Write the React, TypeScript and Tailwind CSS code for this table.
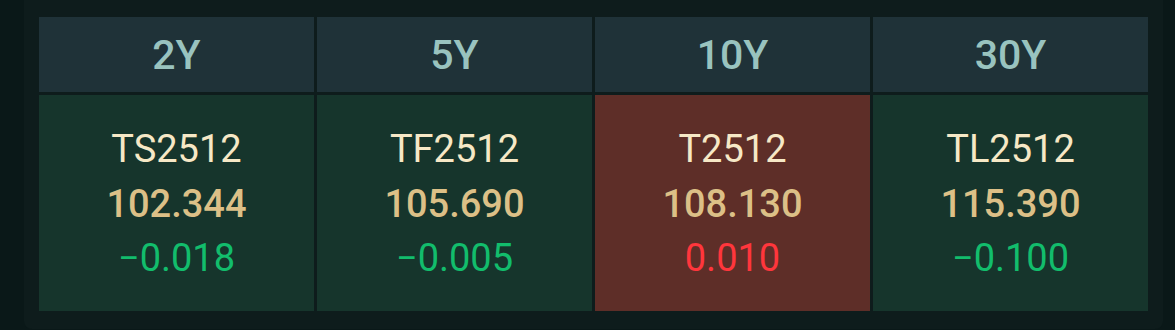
const contracts = [
  { tenor: '2Y', code: 'TS2512', price: '102.344', change: '−0.018', up: false },
  { tenor: '5Y', code: 'TF2512', price: '105.690', change: '−0.005', up: false },
  { tenor: '10Y', code: 'T2512', price: '108.130', change: '0.010', up: true },
  { tenor: '30Y', code: 'TL2512', price: '115.390', change: '−0.100', up: false },
];

export default function App() {
  return (
    <div className="h-[330px] w-[1175px] bg-[#0a1818] pl-[24px] pr-[12px] pb-[1px] font-['Roboto',sans-serif]">
      <div className="h-full rounded-b-lg bg-[#0e1c1c] px-[15px] pt-[17px] pb-[18px]">
        <div className="grid h-full grid-cols-4 grid-rows-[75px_1fr] gap-[3px]">
          {contracts.map((c) => (
            <div
              key={c.tenor}
              className="flex items-center justify-center bg-[#1f3238] pt-[2px] text-[41px] font-medium text-[#99c3bf]"
            >
              {c.tenor}
            </div>
          ))}
          {contracts.map((c) => (
            <div
              key={c.code}
              className={`flex flex-col items-center justify-center pt-[2px] text-[38px] leading-[54.5px] ${
                c.up ? 'bg-[#5e2e28]' : 'bg-[#16352c]'
              }`}
            >
              <span className="text-[#f6e8c6]">{c.code}</span>
              <span className="font-medium text-[#dcc087]">{c.price}</span>
              <span className={c.up ? 'text-[#ff363c]' : 'text-[#12bd6c]'}>
                {c.change}
              </span>
            </div>
          ))}
        </div>
      </div>
    </div>
  );
}
